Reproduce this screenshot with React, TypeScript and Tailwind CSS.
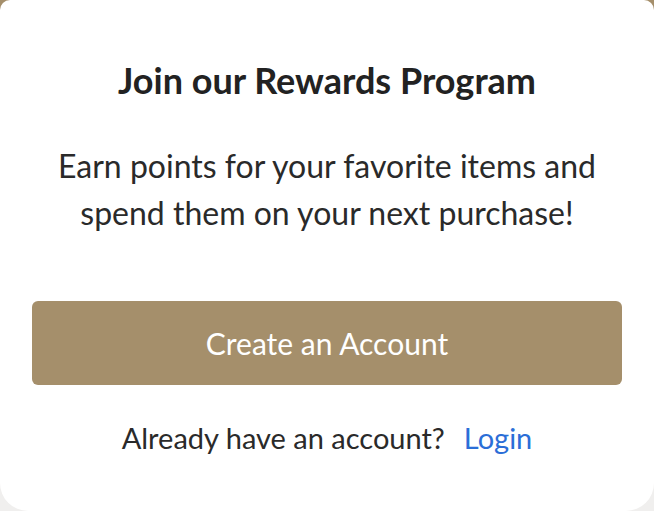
import React from 'react';

export default function App() {
  return (
    <div className="w-[654px] h-[511px] bg-[linear-gradient(to_bottom,#a58f6b_0%,#a58f6b_8%,#f0efee_50%,#f0efee_100%)] font-['Lato','Noto_Sans',sans-serif]">
      <div className="w-full h-full bg-white rounded-t-[10px] rounded-b-[28px] flex flex-col items-center px-8 pt-[58px]">
        <h2 className="text-[36px] font-bold text-[#222222] leading-[44px]">Join our Rewards Program</h2>
        <p className="mt-[40px] text-[32px] leading-[47px] text-[#2a2a2a] text-center">
          Earn points for your favorite items and
          <br />
          spend them on your next purchase!
        </p>
        <button className="mt-[65px] w-full h-[84px] shrink-0 rounded-[6px] bg-[#a58f6b] text-white text-[30px]">
          Create an Account
        </button>
        <p className="mt-[33px] text-[29px] leading-[40px] text-[#2a2a2a]">
          Already have an account?
          <a href="#" className="ml-[19px] text-[#2b6ed7]">Login</a>
        </p>
      </div>
    </div>
  );
}
